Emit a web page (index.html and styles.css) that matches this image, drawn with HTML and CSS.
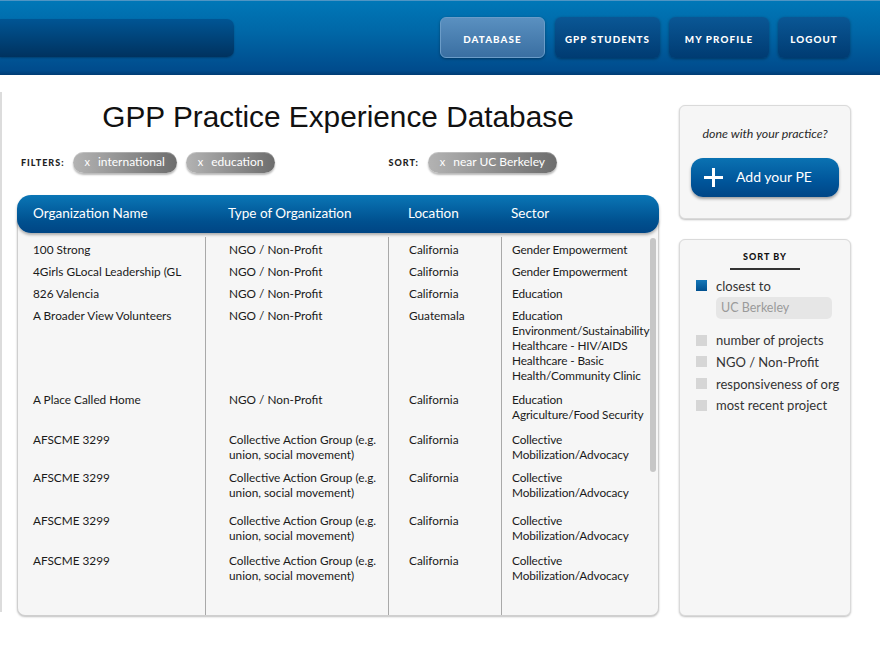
FILE: index.html
```html
<!DOCTYPE html>
<html>
<head>
<meta charset="utf-8">
<link rel="stylesheet" href="styles.css">
</head>
<body>
<header class="topbar">
  <div class="brand-slot"></div>
  <nav class="nav">
    <a class="nav-btn active">DATABASE</a>
    <a class="nav-btn w105">GPP STUDENTS</a>
    <a class="nav-btn w100">MY PROFILE</a>
    <a class="nav-btn w72">LOGOUT</a>
  </nav>
</header>
<div class="main">
  <div class="edge"></div>
  <section class="content">
    <h1 class="title">GPP Practice Experience Database</h1>
    <div class="controls">
      <span class="label">FILTERS:</span>
      <span class="pill"><span class="x">x</span>international</span>
      <span class="pill"><span class="x">x</span>education</span>
      <span class="label sort-label">SORT:</span>
      <span class="pill"><span class="x">x</span>near UC Berkeley</span>
    </div>
    <div class="table">
      <div class="thead grid">
        <div class="c1">Organization Name</div>
        <div class="c2">Type of Organization</div>
        <div class="c3">Location</div>
        <div class="c4">Sector</div>
      </div>
      <div class="tbody">
        <div class="row grid"><div class="c1">100 Strong</div><div class="c2">NGO / Non-Profit</div><div class="c3">California</div><div class="c4">Gender Empowerment</div></div>
        <div class="row grid"><div class="c1">4Girls GLocal Leadership (GL</div><div class="c2">NGO / Non-Profit</div><div class="c3">California</div><div class="c4">Gender Empowerment</div></div>
        <div class="row grid"><div class="c1">826 Valencia</div><div class="c2">NGO / Non-Profit</div><div class="c3">California</div><div class="c4">Education</div></div>
        <div class="row grid pb4"><div class="c1">A Broader View Volunteers</div><div class="c2">NGO / Non-Profit</div><div class="c3">Guatemala</div><div class="c4">Education<br>Environment/Sustainability<br>Healthcare - HIV/AIDS<br>Healthcare - Basic<br>Health/Community Clinic</div></div>
        <div class="row grid pb5"><div class="c1">A Place Called Home</div><div class="c2">NGO / Non-Profit</div><div class="c3">California</div><div class="c4">Education<br>Agriculture/Food Security</div></div>
        <div class="row grid pb3"><div class="c1">AFSCME 3299</div><div class="c2">Collective Action Group (e.g. union, social movement)</div><div class="c3">California</div><div class="c4">Collective<br>Mobilization/Advocacy</div></div>
        <div class="row grid pb8"><div class="c1">AFSCME 3299</div><div class="c2">Collective Action Group (e.g. union, social movement)</div><div class="c3">California</div><div class="c4">Collective<br>Mobilization/Advocacy</div></div>
        <div class="row grid pb5"><div class="c1">AFSCME 3299</div><div class="c2">Collective Action Group (e.g. union, social movement)</div><div class="c3">California</div><div class="c4">Collective<br>Mobilization/Advocacy</div></div>
        <div class="row grid pb5"><div class="c1">AFSCME 3299</div><div class="c2">Collective Action Group (e.g. union, social movement)</div><div class="c3">California</div><div class="c4">Collective<br>Mobilization/Advocacy</div></div>
        <div class="row grid filler"><div class="c1"></div><div class="c2"></div><div class="c3"></div><div class="c4"></div></div>
        <div class="scrollbar"></div>
      </div>
    </div>
  </section>
  <aside class="sidebar">
    <div class="panel add-panel">
      <p class="prompt">done with your practice?</p>
      <a class="add-btn">
        <svg class="plus" width="21" height="21" viewBox="0 0 21 21"><path d="M10.5 1v19M1 10.5h19" stroke="#fff" stroke-width="3" stroke-linecap="butt"/></svg>
        <span>Add your PE</span>
      </a>
    </div>
    <div class="panel sort-panel">
      <div class="sort-head">SORT BY</div>
      <ul class="options">
        <li class="opt"><span class="box on"></span>closest to</li>
        <li class="input-row"><span class="fake-input">UC Berkeley</span></li>
        <li class="opt first-off"><span class="box"></span>number of projects</li>
        <li class="opt"><span class="box"></span>NGO / Non-Profit</li>
        <li class="opt"><span class="box"></span>responsiveness of org</li>
        <li class="opt"><span class="box"></span>most recent project</li>
      </ul>
    </div>
  </aside>
</div>
</body>
</html>
```

FILE: styles.css
```css
* { box-sizing: border-box; }
html, body { margin: 0; padding: 0; background: #fff; }
body { font-family: Lato, "Open Sans", sans-serif; color: #1a1a1a; width: 880px; height: 660px; overflow: hidden; }

.topbar {
  height: 75px;
  background: linear-gradient(#0077b7 0%, #0068a8 40%, #004b8c 94%, #003c74 100%);
  border-top: 1px solid #4f95c4;
  display: flex;
  align-items: flex-start;
  justify-content: space-between;
}
.brand-slot {
  width: 234px;
  height: 38px;
  margin-top: 18px;
  border-radius: 0 7px 7px 0;
  background: linear-gradient(#005594, #00325f);
  box-shadow: 0 1px 2px rgba(0,0,0,0.25);
}
.nav { display: flex; gap: 10px; margin-top: 16px; margin-right: 30px; }
.nav-btn {
  height: 41px;
  width: 105px;
  padding-top: 2px;
  border-radius: 6px;
  display: flex; align-items: center; justify-content: center;
  color: #fff;
  font-family: Lato, sans-serif;
  font-weight: 900;
  font-size: 9.8px;
  letter-spacing: 1.1px;
  background: linear-gradient(#0a5795, #003b72);
  box-shadow: 0 1px 3px rgba(0,0,0,0.35);
}
.nav-btn.active {
  background: linear-gradient(#5a90c0, #3a6fa2);
  border: 1px solid #6b9cc8;
}
.nav-btn.w100 { width: 100px; margin-left: -1px; }
.nav-btn.w72 { width: 72px; margin-left: -1px; }

.main { display: flex; align-items: flex-start; }
.edge { width: 2px; height: 520px; margin-top: 17px; background: #dcdcdc; }

.content { width: 642px; margin-left: 15px; padding-top: 25px; }
.title {
  margin: 0;
  text-align: center;
  font-family: "Liberation Sans", Arial, sans-serif;
  font-weight: normal;
  font-size: 29.8px;
  line-height: 34px;
  color: #111;
}
.controls { display: flex; align-items: center; height: 22px; margin-top: 17px; }
.label {
  font-weight: 900;
  font-size: 9px;
  letter-spacing: 1px;
  color: #222;
  margin-left: 4px;
  margin-right: 8px;
}
.sort-label { margin-left: 104px; margin-right: 9px; }
.pill {
  display: inline-flex; align-items: center;
  height: 21px;
  padding: 0 12px 1px 12px;
  margin-right: 9px;
  border-radius: 11px;
  color: #fff;
  font-size: 12px;
  background: linear-gradient(to right, #b3b3b3, #8c8c8c 55%, #6d6d6d);
  box-shadow: 0 2px 2px rgba(0,0,0,0.28), inset 0 1px 0 rgba(255,255,255,0.25);
}
.pill .x { margin-right: 8px; font-size: 11px; }

.table {
  margin-top: 22px;
  height: 421px;
  position: relative;
  display: flex; flex-direction: column;
}
.grid { display: grid; grid-template-columns: 187px 183px 113px 159px; }
.thead {
  height: 38px;
  padding-bottom: 2px;
  border-radius: 14px;
  background: linear-gradient(#0a76b6, #00508f 70%, #004584);
  color: #fff;
  font-size: 13.5px;
  align-items: center;
  position: relative; z-index: 2;
  box-shadow: 0 2px 3px rgba(0,0,0,0.3);
}
.thead .c1 { padding-left: 16px; }
.thead .c2 { padding-left: 24px; }
.thead .c3 { padding-left: 21px; }
.thead .c4 { padding-left: 11px; }
.tbody {
  flex: 1;
  margin-top: -14px;
  padding-top: 18px;
  background: #f6f6f6;
  border: 1px solid #cfcfcf;
  border-top: none;
  border-radius: 0 0 8px 8px;
  box-shadow: 0 1px 2px rgba(0,0,0,0.25);
  display: flex; flex-direction: column;
  position: relative;
  font-size: 11.8px;
  line-height: 15px;
  color: #1a1a1a;
}
.row > div { padding-top: 5px; padding-bottom: 2px; }
.row.pb3 > div { padding-bottom: 3px; }
.row.pb4 > div { padding-bottom: 4px; }
.row.pb5 > div { padding-bottom: 5px; }
.row.pb8 > div { padding-bottom: 8px; }
.row .c1 { padding-left: 15px; }
.row .c2 { padding-left: 23px; padding-right: 8px; border-left: 1px solid #a9a9a9; }
.row .c3 { padding-left: 20px; border-left: 1px solid #a9a9a9; }
.row .c4 { padding-left: 10px; border-left: 1px solid #a9a9a9; letter-spacing: -0.1px; }
.row.filler { flex: 1; }
.scrollbar {
  position: absolute;
  right: 2px; top: 19px;
  width: 6px; height: 234px;
  border-radius: 3px;
  background: #c6c6c6;
}

.sidebar { width: 172px; margin-left: 20px; padding-top: 30px; display: flex; flex-direction: column; gap: 20px; }
.panel {
  background: #f6f6f6;
  border: 1px solid #dadada;
  border-radius: 6px;
  box-shadow: 0 1px 2px rgba(0,0,0,0.25);
}
.add-panel { height: 114px; padding: 20px 11px 0; }
.prompt {
  margin: 0;
  text-align: center;
  font-style: italic;
  font-size: 12.4px;
  line-height: 16px;
  color: #2a2a2a;
}
.add-btn {
  margin-top: 16px;
  height: 39px;
  width: 148px;
  border-radius: 12px;
  display: flex; align-items: center;
  padding-left: 12px;
  padding-bottom: 3px;
  background: linear-gradient(#0a72b2, #00559a 60%, #004686);
  box-shadow: 0 2px 3px rgba(0,0,0,0.35);
  color: #fff;
  font-size: 14px;
}
.plus { margin-right: 12px; margin-top: 2px; }

.sort-panel { height: 377px; padding-top: 11px; }
.sort-head {
  width: 70px;
  margin: 0 auto;
  text-align: center;
  font-weight: 900;
  font-size: 9px;
  letter-spacing: 1px;
  color: #111;
  padding-bottom: 6px;
  border-bottom: 2px solid #333;
}
.options { list-style: none; margin: 5px 0 0; padding: 0 0 0 16px; }
.opt {
  display: flex; align-items: center;
  height: 21.6px;
  font-size: 13px;
  color: #333;
}
.box { width: 11px; height: 11px; margin-right: 9px; background: #d6d6d6; }
.box.on { background: linear-gradient(#1577b8, #00508f); }
.input-row { padding-left: 20px; }
.fake-input {
  display: block;
  width: 116px; height: 22px;
  border-radius: 5px;
  background: #e6e6e6;
  color: #9a9a9a;
  font-size: 12.5px;
  line-height: 22px;
  padding-left: 5px;
}
.opt.first-off { margin-top: 11px; }
```
